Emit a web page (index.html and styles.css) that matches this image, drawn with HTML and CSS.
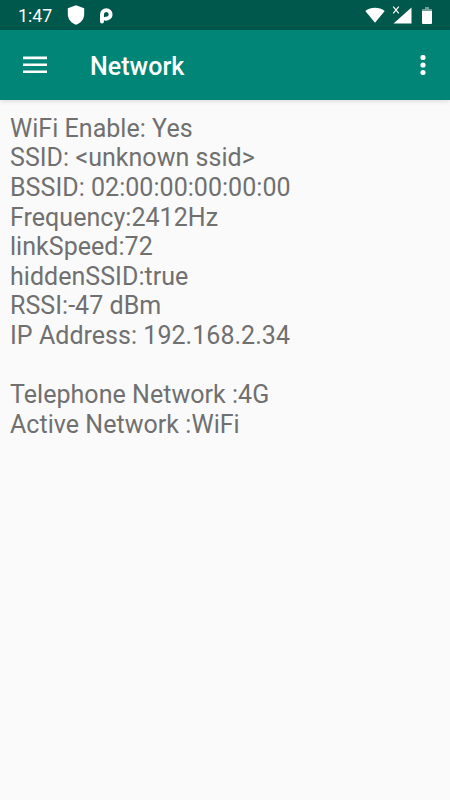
FILE: index.html
```html
<!DOCTYPE html>
<html lang="en">
<head>
    <meta charset="UTF-8">
    <meta name="viewport" content="width=device-width, initial-scale=1.0">
    <title>Network</title>
    <link rel="stylesheet" href="styles.css">
</head>
<body>
    <!-- Status bar -->
    <div class="status-bar">
        <span class="clock">1:47</span>
        <svg class="shield" width="18" height="20" viewBox="0 0 18 20">
            <path d="M9 0.300 L17.200 3.300 V9 C17.200 14 14 18 9 19.700 C4 18 0.800 14 0.800 9 V3.300 Z" fill="#fff"/>
        </svg>
        <svg class="parking" width="13" height="16" viewBox="0 0 13 16">
            <path d="M2 13.600 V6.400 A4.300 4.300 0 1 1 6.300 10.700 H5.500" fill="none" stroke="#fff" stroke-width="3.900" stroke-linecap="round"/>
        </svg>
        <div class="status-icons">
            <svg width="20" height="16" viewBox="0 0 20 16">
                <path d="M0.300 4 C6 -0.400 14 -0.400 19.700 4 L10 15.800 Z" fill="#fff"/>
            </svg>
            <svg class="signal" width="20" height="18" viewBox="0 0 20 18">
                <path d="M19.500 1.500 V17.500 H1.500 Z" fill="#fff"/>
                <path d="M1.200 0.700 L6.800 7.300 M6.800 0.700 L1.200 7.300" stroke="#fff" stroke-width="1.200" fill="none"/>
            </svg>
            <svg class="battery" width="10" height="17" viewBox="0 0 10 17">
                <path d="M3 0 H7 V2 H10 V4 H0 V2 H3 Z" fill="#6f9f98"/>
                <path d="M0 4 H10 V16 Q10 17 9 17 H1 Q0 17 0 16 Z" fill="#fff"/>
            </svg>
        </div>
    </div>

    <!-- Toolbar -->
    <header class="toolbar">
        <svg class="menu" width="24" height="18" viewBox="0 0 24 18">
            <path d="M0 1.900 H24 M0 8.800 H24 M0 15.700 H24" stroke="#fff" stroke-width="2.600"/>
        </svg>
        <h1>Network</h1>
        <svg class="more" width="6" height="20" viewBox="0 0 6 20">
            <circle cx="3" cy="2.500" r="2.600" fill="#fff"/>
            <circle cx="3" cy="10" r="2.600" fill="#fff"/>
            <circle cx="3" cy="17.500" r="2.600" fill="#fff"/>
        </svg>
    </header>

    <main class="info">
        <p>WiFi Enable: Yes</p>
        <p>SSID: &lt;unknown ssid&gt;</p>
        <p>BSSID: 02:00:00:00:00:00</p>
        <p>Frequency:2412Hz</p>
        <p>linkSpeed:72</p>
        <p>hiddenSSID:true</p>
        <p>RSSI:-47 dBm</p>
        <p>IP Address: 192.168.2.34</p>
        <p class="gap">Telephone Network :4G</p>
        <p>Active Network :WiFi</p>
    </main>
</body>
</html>
```
FILE: styles.css
```css
body {
    margin: 0;
    min-height: 800px;
    background-color: #fafafa;
    font-family: Roboto, sans-serif;
}
.status-bar {
    display: flex;
    align-items: center;
    box-sizing: border-box;
    height: 30px;
    padding: 0 18px;
    background-color: #00574b;
    color: white;
}
.clock {
    width: 49px;
    margin-top: 1px;
    font-size: 17.8px;
}
.parking {
    margin: 1px 0 0 14.5px;
}
.status-icons {
    display: flex;
    align-items: center;
    margin-left: auto;
}
.signal {
    margin: 0 10px 0 7px;
}
.battery {
    margin-top: 1px;
}
.toolbar {
    display: flex;
    align-items: center;
    box-sizing: border-box;
    height: 70px;
    padding: 0 24.5px 0 23px;
    background-color: #008577;
    color: white;
    box-shadow: 0 1px 5px rgba(0, 0, 0, 0.15);
}
.toolbar h1 {
    margin: 2px 0 0 43px;
    font-size: 25px;
    font-weight: 500;
    letter-spacing: 0.05px;
}
.more {
    margin-left: auto;
}
.info {
    padding: 13.8px 10px;
    color: #707070;
    font-size: 25px;
    letter-spacing: 0.04px;
    line-height: 29.6px;
}
.info p {
    margin: 0;
}
.info .gap {
    margin-top: 29.6px;
}
```
